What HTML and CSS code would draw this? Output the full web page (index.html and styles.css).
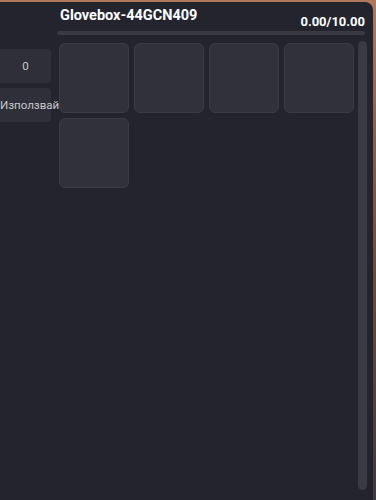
FILE: index.html
```html
<!DOCTYPE html>
<html>
<head>
<meta charset="utf-8">
<link rel="stylesheet" href="styles.css">
</head>
<body>
<div class="panel">
  <div class="sidebar">
    <div class="btn">0</div>
    <div class="btn">Използвай</div>
  </div>
  <div class="main">
    <div class="header">
      <div class="title">Glovebox-44GCN409</div>
      <div class="weight">0.00/10.00</div>
    </div>
    <div class="progress"></div>
    <div class="content">
      <div class="grid">
        <div class="slot"></div>
        <div class="slot"></div>
        <div class="slot"></div>
        <div class="slot"></div>
        <div class="slot"></div>
      </div>
      <div class="scrollbar"></div>
    </div>
  </div>
</div>
</body>
</html>
```
FILE: styles.css
```css
html, body {
  margin: 0;
  padding: 0;
}
body {
  width: 376px;
  height: 500px;
  overflow: hidden;
  background: linear-gradient(180deg, #b27a5c 0%, #8a5a44 30%, #6a4636 60%, #3e3a3c 100%);
  font-family: Roboto, "Noto Sans", sans-serif;
}
.panel {
  margin-top: 2px;
  width: 373px;
  height: 498px;
  background: #24242e;
  border-top-right-radius: 8px;
  display: flex;
}
.sidebar {
  width: 51px;
  padding-top: 47px;
  display: flex;
  flex-direction: column;
  gap: 5px;
  flex-shrink: 0;
}
.btn {
  height: 34px;
  background: #2f2f39;
  border-radius: 0 4px 4px 0;
  color: #c8c8cc;
  font-size: 11.5px;
  display: flex;
  align-items: center;
  justify-content: safe center;
  white-space: nowrap;
}
.main {
  margin-left: 6px;
  width: 310px;
  display: flex;
  flex-direction: column;
}
.header {
  height: 29px;
  display: flex;
  justify-content: space-between;
  align-items: flex-end;
  padding-left: 3px;
  padding-right: 2px;
  box-sizing: border-box;
}
.title {
  color: #ffffff;
  font-weight: 700;
  font-size: 14.5px;
  line-height: 14px;
  padding-bottom: 8px;
}
.weight {
  color: #ffffff;
  font-weight: 700;
  font-size: 13px;
  line-height: 12px;
  padding-bottom: 3px;
}
.progress {
  width: 308px;
  height: 4px;
  border-radius: 2px;
  background: #3a3a44;
}
.content {
  margin-top: 6px;
  display: flex;
  justify-content: space-between;
  flex: 1;
}
.grid {
  padding: 2px 0 0 2px;
  display: grid;
  grid-template-columns: repeat(4, 70px);
  grid-auto-rows: 70px;
  gap: 5px;
  align-content: start;
}
.slot {
  background: #31313b;
  border: 1px solid #3b3b45;
  border-radius: 6px;
  box-sizing: border-box;
}
.scrollbar {
  width: 9px;
  height: 449px;
  border-radius: 5px;
  background: #3a3a45;
}
```
